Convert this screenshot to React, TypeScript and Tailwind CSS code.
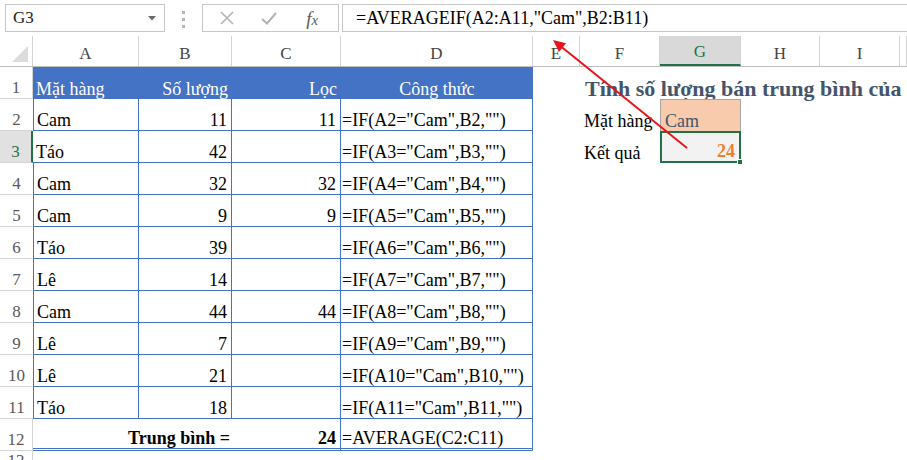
import type { ReactNode } from "react";

const COLS =
  "grid grid-cols-[33px_106px_93px_109px_192px_47px_80px_81px_79px_80px_1fr]";

const BLUE = "border-[#4472c4]";

const data: [string, number, number | null][] = [
  ["Cam", 11, 11],
  ["Táo", 42, null],
  ["Cam", 32, 32],
  ["Cam", 9, 9],
  ["Táo", 39, null],
  ["Lê", 14, null],
  ["Cam", 44, 44],
  ["Lê", 7, null],
  ["Lê", 21, null],
  ["Táo", 18, null],
];

const RowHead = ({ n, active, edge }: { n: number | string; active?: boolean; edge?: boolean }) => (
  <div
    className={`flex items-end justify-center leading-[20px] text-[17px] border-b border-b-[#d4d4d4] ${
      active
        ? "bg-[#e1e1e1] text-[#217346] border-r-2 border-r-[#217346]"
        : edge
        ? "text-[#595959] border-r border-r-[#d4d4d4]"
        : "text-[#595959]"
    }`}
  >
    {n}
  </div>
);

const Cell = ({ className = "", children }: { className?: string; children?: ReactNode }) => (
  <div className={`flex items-end leading-[20px] whitespace-nowrap font-['Liberation_Serif',serif] ${className}`}>
    {children}
  </div>
);

const SheetRow = ({ children }: { children: ReactNode }) => (
  <div className={`${COLS} h-[32px]`}>{children}</div>
);

export default function App() {
  const letters = ["A", "B", "C", "D", "E", "F", "G", "H", "I", ""];

  return (
    <div className="relative w-[907px] h-[460px] overflow-hidden bg-white text-[18px] text-black font-['Liberation_Serif',serif]">
      {/* formula bar */}
      <div className="h-[36px] flex items-start pt-[4px]">
        <div className="ml-[5px] w-[160px] h-[28px] border border-[#c6c6c6] flex items-center justify-between pl-[7px] pr-[8px] text-[17px] text-[#222]">
          <span>G3</span>
          <svg width="8" height="5" viewBox="0 0 8 5">
            <polygon points="0,0 8,0 4,4.5" fill="#6b6b6b" />
          </svg>
        </div>
        <div className="w-[37px] flex flex-col items-center gap-[4px] pt-[7px]">
          <span className="w-[3px] h-[3px] bg-[#b4b4b4]" />
          <span className="w-[3px] h-[3px] bg-[#b4b4b4]" />
          <span className="w-[3px] h-[3px] bg-[#b4b4b4]" />
        </div>
        <div className="w-[137px] h-[28px] border border-[#c6c6c6] flex items-center">
          <div className="w-[48px] flex justify-center">
            <svg width="14" height="14" viewBox="0 0 14 14">
              <path d="M1 1 L13 13 M13 1 L1 13" stroke="#b3b3b3" strokeWidth="1.6" />
            </svg>
          </div>
          <div className="w-[36px] flex justify-center">
            <svg width="16" height="13" viewBox="0 0 16 13">
              <path d="M1 7 L6 11.5 L15 1" stroke="#b3b3b3" strokeWidth="2" fill="none" />
            </svg>
          </div>
          <div className="w-[52px] flex justify-center items-baseline italic text-[19px] text-[#5a5a5a] leading-none">
            <span>f</span>
            <span className="text-[15px]">x</span>
          </div>
        </div>
        <div className="ml-[3px] flex-1 h-[28px] border-y border-l border-[#c6c6c6] pl-[13px] flex items-center text-[18px] whitespace-nowrap">
          =AVERAGEIF(A2:A11,"Cam",B2:B11)
        </div>
      </div>

      {/* column headers */}
      <div className={`${COLS} h-[31px] border-b border-[#bfbfbf]`}>
        <div className="relative border-r border-[#d4d4d4]">
          <svg className="absolute right-[4px] bottom-[4px]" width="16" height="16" viewBox="0 0 16 16">
            <polygon points="16,0 16,16 0,16" fill="#dcdcdc" />
          </svg>
        </div>
        {letters.map((l, i) => (
          <div
            key={i}
            className={`flex items-end justify-center leading-[20px] pb-[2px] text-[17px] border-r border-[#d4d4d4] ${
              l === "G" ? "bg-[#d9d9d9] text-[#217346] border-b-2 border-b-[#217346]" : "text-[#444]"
            }`}
          >
            {l}
          </div>
        ))}
      </div>

      {/* row 1 */}
      <SheetRow>
        <RowHead n={1} edge />
        <Cell className="bg-[#4472c4] text-white pl-[3px]">Mặt hàng</Cell>
        <Cell className="bg-[#4472c4] text-white justify-end pr-[4px]">Số lượng</Cell>
        <Cell className="bg-[#4472c4] text-white justify-end pr-[4px]">Lọc</Cell>
        <Cell className="bg-[#4472c4] text-white justify-center">Công thức</Cell>
        <div />
        <Cell className="pl-[5px] font-bold text-[22px] text-[#44546a]">Tính số lượng bán trung bình của</Cell>
        <div />
        <div />
        <div />
        <div />
      </SheetRow>

      {data.map(([item, qty, filt], i) => {
        const n = i + 2;
        const active = n === 3;
        return (
          <SheetRow key={n}>
            <RowHead n={n} active={active} />
            <Cell className={`pl-[3px] border-b border-r ${active ? "" : "border-l"} ${BLUE}`}>{item}</Cell>
            <Cell className={`justify-end pr-[4px] border-b border-r ${BLUE}`}>{qty}</Cell>
            <Cell className={`justify-end pr-[4px] border-b border-r ${BLUE}`}>{filt ?? ""}</Cell>
            <Cell className={`pl-[1px] border-b border-r ${BLUE}`}>
              {`=IF(A${n}="Cam",B${n},"")`}
            </Cell>
            <div />
            {n === 2 && <Cell className="pl-[4px]">Mặt hàng</Cell>}
            {n === 2 && (
              <Cell className="pl-[4px] bg-[#f8cbad] border-x border-t border-[#a6a6a6] text-[#44546a]">Cam</Cell>
            )}
            {n === 3 && <Cell className="pl-[4px]">Kết quả</Cell>}
            {n === 3 && (
              <div className="relative bg-[#f2f2f2] border-2 border-[#217346] flex items-end justify-end pr-[4px] leading-[20px] font-bold text-[#ed7d31]">
                24
                <span className="absolute -right-[4px] -bottom-[4px] w-[6px] h-[6px] bg-[#217346] border border-white" />
              </div>
            )}
            {n > 3 && <div />}
            {n > 3 && <div />}
            <div />
            <div />
            <div />
          </SheetRow>
        );
      })}

      {/* row 12 */}
      <SheetRow>
        <RowHead n={12} edge />
        <Cell className={`col-span-2 justify-end pr-[2px] font-bold border-b-[3px] border-double ${BLUE}`}>
          Trung bình =
        </Cell>
        <Cell className={`justify-end pr-[4px] font-bold border-r border-b-[3px] border-double ${BLUE}`}>24</Cell>
        <Cell className={`pl-[1px] border-r border-b-[3px] border-double ${BLUE}`}>=AVERAGE(C2:C11)</Cell>
        <div />
        <div />
        <div />
        <div />
        <div />
        <div />
      </SheetRow>

      {/* row 13 */}
      <div className={`${COLS} h-[20px]`}>
        <div className="flex justify-center text-[17px] leading-[20px] text-[#595959] border-r border-[#d4d4d4]">13</div>
      </div>

      {/* red annotation arrow */}
      <svg className="absolute left-0 top-0 pointer-events-none" width="907" height="460">
        <line x1="687" y1="148" x2="561" y2="46.5" stroke="#e8141c" strokeWidth="2" />
        <polygon points="553,40 566,43.2 559,52" fill="#e8141c" />
      </svg>
    </div>
  );
}
